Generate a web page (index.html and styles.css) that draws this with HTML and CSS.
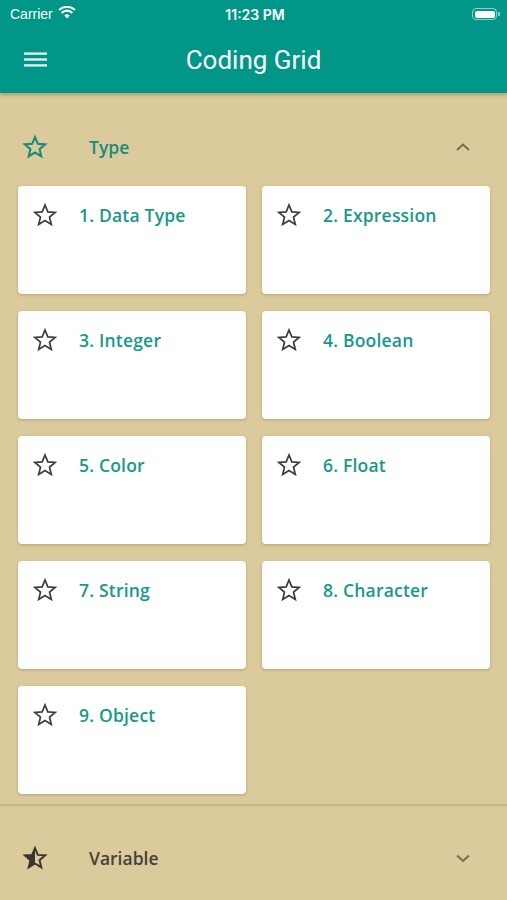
FILE: index.html
```html
<!DOCTYPE html>
<html>
<head>
<meta charset="utf-8">
<link rel="stylesheet" href="styles.css">
</head>
<body>
<div class="app">
  <div class="topbar">
    <div class="status">
      <div class="carrier">Carrier
        <svg class="wifi" width="18" height="13" viewBox="0 0 18 13"><path d="M9 12.5 L6.3 9.6 A3.8 3.8 0 0 1 11.7 9.6 Z" fill="#fff"/><path d="M3.6 6.9 A7.6 7.6 0 0 1 14.4 6.9" fill="none" stroke="#fff" stroke-width="2.1"/><path d="M1 4.1 A11.3 11.3 0 0 1 17 4.1" fill="none" stroke="#fff" stroke-width="2.1"/></svg>
      </div>
      <div class="time">11:23 PM</div>
      <div class="battery"><span class="batt-body"><span class="batt-fill"></span></span><span class="batt-tip"></span></div>
    </div>
    <div class="appbar">
      <svg class="menu" width="24" height="18" viewBox="0 0 24 18"><rect x="0" y="1.5" width="23" height="2.2" fill="#fff"/><rect x="0" y="7.4" width="23" height="2.2" fill="#fff"/><rect x="0" y="13.3" width="23" height="2.2" fill="#fff"/></svg>
      <div class="title">Coding Grid</div>
    </div>
  </div>

  <div class="section open">
    <div class="sec-head">
      <svg class="sec-icon" width="26" height="26" viewBox="0 0 24 24"><path d="M12 2.8 L14.6 9.1 L21.4 9.6 L16.2 14 L17.8 20.7 L12 17.1 L6.2 20.7 L7.8 14 L2.6 9.6 L9.4 9.1 Z" fill="none" stroke="#178c7c" stroke-width="1.9" stroke-linejoin="miter"/></svg>
      <div class="sec-title teal">Type</div>
      <svg class="chev" width="16" height="10" viewBox="0 0 16 10"><path d="M2 8 L8 2.5 L14 8" fill="none" stroke="#7a6c4c" stroke-width="2"/></svg>
    </div>
    <div class="grid">
      <div class="card"><svg class="cstar" width="26" height="26" viewBox="0 0 24 24"><path d="M12 2.8 L14.6 9.1 L21.4 9.6 L16.2 14 L17.8 20.7 L12 17.1 L6.2 20.7 L7.8 14 L2.6 9.6 L9.4 9.1 Z" fill="none" stroke="#3d3d3d" stroke-width="1.6"/></svg><span class="ctitle">1. Data Type</span></div>
      <div class="card"><svg class="cstar" width="26" height="26" viewBox="0 0 24 24"><path d="M12 2.8 L14.6 9.1 L21.4 9.6 L16.2 14 L17.8 20.7 L12 17.1 L6.2 20.7 L7.8 14 L2.6 9.6 L9.4 9.1 Z" fill="none" stroke="#3d3d3d" stroke-width="1.6"/></svg><span class="ctitle">2. Expression</span></div>
      <div class="card"><svg class="cstar" width="26" height="26" viewBox="0 0 24 24"><path d="M12 2.8 L14.6 9.1 L21.4 9.6 L16.2 14 L17.8 20.7 L12 17.1 L6.2 20.7 L7.8 14 L2.6 9.6 L9.4 9.1 Z" fill="none" stroke="#3d3d3d" stroke-width="1.6"/></svg><span class="ctitle">3. Integer</span></div>
      <div class="card"><svg class="cstar" width="26" height="26" viewBox="0 0 24 24"><path d="M12 2.8 L14.6 9.1 L21.4 9.6 L16.2 14 L17.8 20.7 L12 17.1 L6.2 20.7 L7.8 14 L2.6 9.6 L9.4 9.1 Z" fill="none" stroke="#3d3d3d" stroke-width="1.6"/></svg><span class="ctitle">4. Boolean</span></div>
      <div class="card"><svg class="cstar" width="26" height="26" viewBox="0 0 24 24"><path d="M12 2.8 L14.6 9.1 L21.4 9.6 L16.2 14 L17.8 20.7 L12 17.1 L6.2 20.7 L7.8 14 L2.6 9.6 L9.4 9.1 Z" fill="none" stroke="#3d3d3d" stroke-width="1.6"/></svg><span class="ctitle">5. Color</span></div>
      <div class="card"><svg class="cstar" width="26" height="26" viewBox="0 0 24 24"><path d="M12 2.8 L14.6 9.1 L21.4 9.6 L16.2 14 L17.8 20.7 L12 17.1 L6.2 20.7 L7.8 14 L2.6 9.6 L9.4 9.1 Z" fill="none" stroke="#3d3d3d" stroke-width="1.6"/></svg><span class="ctitle">6. Float</span></div>
      <div class="card"><svg class="cstar" width="26" height="26" viewBox="0 0 24 24"><path d="M12 2.8 L14.6 9.1 L21.4 9.6 L16.2 14 L17.8 20.7 L12 17.1 L6.2 20.7 L7.8 14 L2.6 9.6 L9.4 9.1 Z" fill="none" stroke="#3d3d3d" stroke-width="1.6"/></svg><span class="ctitle">7. String</span></div>
      <div class="card"><svg class="cstar" width="26" height="26" viewBox="0 0 24 24"><path d="M12 2.8 L14.6 9.1 L21.4 9.6 L16.2 14 L17.8 20.7 L12 17.1 L6.2 20.7 L7.8 14 L2.6 9.6 L9.4 9.1 Z" fill="none" stroke="#3d3d3d" stroke-width="1.6"/></svg><span class="ctitle">8. Character</span></div>
      <div class="card"><svg class="cstar" width="26" height="26" viewBox="0 0 24 24"><path d="M12 2.8 L14.6 9.1 L21.4 9.6 L16.2 14 L17.8 20.7 L12 17.1 L6.2 20.7 L7.8 14 L2.6 9.6 L9.4 9.1 Z" fill="none" stroke="#3d3d3d" stroke-width="1.6"/></svg><span class="ctitle">9. Object</span></div>
    </div>
  </div>

  <div class="section last">
    <div class="sec-head">
      <svg class="sec-icon" width="26" height="26" viewBox="0 0 24 24"><path d="M12 2.8 L12 17.1 L6.2 20.7 L7.8 14 L2.6 9.6 L9.4 9.1 Z" fill="#3a3530"/><path d="M12 2.8 L14.6 9.1 L21.4 9.6 L16.2 14 L17.8 20.7 L12 17.1 L6.2 20.7 L7.8 14 L2.6 9.6 L9.4 9.1 Z" fill="none" stroke="#3a3530" stroke-width="1.8"/></svg>
      <div class="sec-title dark">Variable</div>
      <svg class="chev" width="16" height="10" viewBox="0 0 16 10"><path d="M2 2.5 L8 8 L14 2.5" fill="none" stroke="#7a6c4c" stroke-width="2"/></svg>
    </div>
  </div>
</div>
</body>
</html>
```
FILE: styles.css
```css
* { box-sizing: border-box; }
html, body { margin: 0; padding: 0; }
body { background: #dbca9c; font-family: "Open Sans", "Noto Sans", sans-serif; width: 507px; height: 900px; overflow: hidden; }
.app { display: flex; flex-direction: column; }
.topbar { background: #009688; color: #fff; box-shadow: 0 2px 4px rgba(80,60,20,0.35); position: relative; z-index: 2; }
.status { height: 28px; display: flex; align-items: center; justify-content: space-between; padding: 0 7px 0 10px; font-family: "Liberation Sans", Arial, sans-serif; font-size: 14px; }
.carrier { display: flex; align-items: center; gap: 5px; width: 120px; }
.wifi { margin-top: -3px; }
.time { font-family: Inter, "Liberation Sans", sans-serif; font-weight: 600; font-size: 14px; }
.battery { width: 120px; display: flex; justify-content: flex-end; align-items: center; }
.batt-body { width: 25px; height: 12px; border: 1.5px solid rgba(255,255,255,0.55); border-radius: 4px; padding: 1.5px; display: flex; }
.batt-fill { flex: 1; background: #fff; border-radius: 2px; }
.batt-tip { width: 2px; height: 4px; background: rgba(255,255,255,0.55); border-radius: 0 1px 1px 0; margin-left: 1px; }
.appbar { height: 65px; display: flex; align-items: center; position: relative; padding-left: 24px; }
.menu { margin-top: -2px; }
.title { position: absolute; left: 0; right: 0; text-align: center; font-family: Roboto, sans-serif; font-size: 26px; font-weight: 400; top: 17px; pointer-events: none; }
.section { border-bottom: 1.5px solid #cdbb8b; }
.section.last { border-bottom: none; }
.section.open { padding-bottom: 10px; box-shadow: 0 1px 1px rgba(120,100,50,0.2); }
.sec-head { height: 106px; display: flex; align-items: center; padding: 0 36px 0 22px; }
.section.open .sec-head { height: 92px; padding-top: 15px; }
.sec-icon { flex: none; }
.sec-title { margin-left: 41px; font-size: 17.5px; font-weight: 600; flex: 1; }
.sec-title.teal { color: #178c7c; }
.sec-title.dark { color: #46403a; }
.chev { flex: none; }
.grid { display: grid; grid-template-columns: 228px 228px; column-gap: 16px; row-gap: 17px; padding: 1px 18px 0; }
.card { background: #fff; height: 108px; border-radius: 4px; box-shadow: 0 1px 3px rgba(110,90,40,0.35); display: flex; align-items: flex-start; padding: 16px 14px; }
.cstar { flex: none; }
.ctitle { margin-left: 21px; color: #17998a; font-size: 17.5px; font-weight: 600; line-height: 26px; letter-spacing: 0.2px; }
```
